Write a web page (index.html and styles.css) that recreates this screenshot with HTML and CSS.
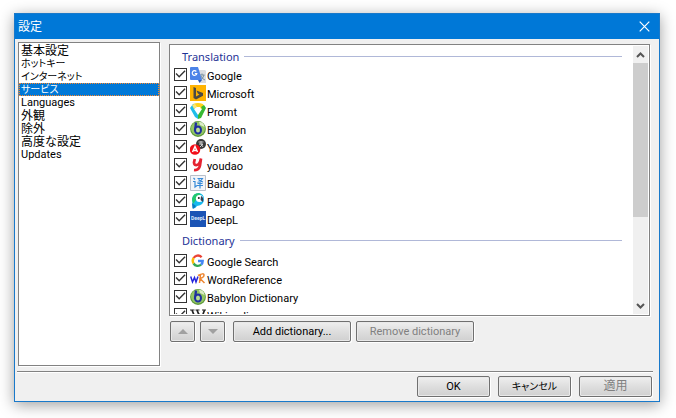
FILE: index.html
```
<!DOCTYPE html>
<html lang="ja">
<head>
    <meta charset="UTF-8">
    <title>設定</title>
    <link rel="stylesheet" href="styles.css">
</head>
<body>
    <div class="window">
        <header class="titlebar">
            <h1>設定</h1>
            <button type="button" class="close" aria-label="閉じる">
                <svg width="11" height="11" viewBox="0 0 11 11"><path d="M.7.7l9.6 9.6M10.3.7L.7 10.3" stroke="#fff" stroke-width="1.2"/></svg>
            </button>
        </header>

        <main class="content">
            <nav class="sections">
                <button type="button" class="kanji">基本設定</button>
                <button type="button" class="kana">ホットキー</button>
                <button type="button" class="kana">インターネット</button>
                <button type="button" class="kana selected" aria-current="page">サービス</button>
                <button type="button">Languages</button>
                <button type="button" class="kanji">外観</button>
                <button type="button" class="kanji">除外</button>
                <button type="button" class="kanji">高度な設定</button>
                <button type="button">Updates</button>
            </nav>

            <section class="services">
                <div class="list">
                    <div class="items">
                        <h2 class="first">Translation</h2>
                        <label><input type="checkbox" checked>
                            <svg class="icon" viewBox="0 0 16 16"><path d="M6 3h9l1 1v12h-6z" fill="#dadce0"/><path d="M9.500 8h5M12 6.500V8M14 8q-1 4-4 5M11 9q1 3 4 4" stroke="#78909c" fill="none"/><path d="M0 1q0-1 1-1h7l4 13H1q-1 0-1-1z" fill="#4c83e8"/><path d="M8 13h4l-2.500 3z" fill="#2857b5"/><path d="M6.300 4.500A2.300 2.300 0 1 0 6.800 6.500H4.800" stroke="#fff" stroke-width="1.200" fill="none"/></svg>
                            Google</label>
                        <label><input type="checkbox" checked>
                            <svg class="icon" viewBox="0 0 16 16"><path d="M0 0h16v16H0z" fill="#ffb300"/><path d="M3.500 2l2.500 1v8.500l3.500-2L7.800 8.600 6.500 5.500 13 8v2.700L6 14.500l-2.500-1.500z" fill="#4a4a45"/></svg>
                            Microsoft</label>
                        <label><input type="checkbox" checked>
                            <svg class="icon" viewBox="0 0 16 16"><path d="M3 1q5-2 10 0l2 4-4 1-1-2H6L4 6z" fill="#ffd21c"/><path d="M3 1L0 5l5 9 3 2V12L4 6l2-2z" fill="#20bdea"/><path d="M16 5l-5 10-3 1v-4l4-6-1-2 3-2z" fill="#37b934"/><path d="M2 2l3-1 2 3-3 2z" fill="#f9e57a"/></svg>
                            Promt</label>
                        <label><input type="checkbox" checked>
                            <svg class="icon" viewBox="0 0 16 16"><circle cx="8" cy="8" r="7.900" fill="#5f9a3c"/><circle cx="8" cy="7.500" r="7" fill="#93c665"/><path d="M9 1q5 0 5.500 5L10 4z" fill="#dcebc8"/><path d="M6 1.500L5 10" stroke="#1f2fa0" stroke-width="2.300" fill="none"/><ellipse cx="8" cy="9" rx="3" ry="3.500" stroke="#1f2fa0" stroke-width="2" fill="#b9dc96"/></svg>
                            Babylon</label>
                        <label><input type="checkbox" checked>
                            <svg class="icon" viewBox="0 0 16 16"><circle cx="11" cy="5" r="5" fill="#393939"/><path d="M8.500 3h5M9 5h4l-3 3M11 2v3l2 3" stroke="#ccc" fill="none"/><circle cx="5" cy="10.500" r="5.300" fill="#f20d18"/><path d="M2.500 13L5 7.500 7.500 13M3.500 11.500h3" stroke="#fff" stroke-width="1.400" fill="none"/></svg>
                            Yandex</label>
                        <label><input type="checkbox" checked>
                            <svg class="icon" viewBox="0 0 16 16"><path d="M4.800 2L4 5.500q0 3 3 2.500 2.500-.5 4-6.500L10 8.500q-1 5-6 4.500" stroke="#e52330" stroke-width="2.700" fill="none"/></svg>
                            youdao</label>
                        <label><input type="checkbox" checked>
                            <svg class="icon" viewBox="0 0 16 16"><path d="M.5.5h15v15H.5z" fill="#f3f5f9" stroke="#b9c0ca"/><path d="M3.500 3l1.500 1.500M3 6.500h2V12l2-1.500M7.500 3.500h5q-1.500 3-5 4M8.500 4.500q2 2 4.500 2.500M7.500 8.500h5M7 10.500h6M10 7v6.500" stroke="#388bd8" stroke-width="1.200" fill="none"/></svg>
                            Baidu</label>
                        <label><input type="checkbox" checked>
                            <svg class="icon" viewBox="0 0 16 16"><path d="M3 15.500L2 6q1-6 7-6 5 1 5 6 0 6-7 7-1 2-4 2.500z" fill="#17b9ef"/><path d="M2 6q1-6 7-6l2 1.500Q6 2 6 7l-3 4z" fill="#25c96b"/><circle cx="9.500" cy="5.500" r="3.600" fill="#fff"/><circle cx="8.800" cy="5" r="1" fill="#222"/><path d="M11 3q3 1 2 6l-2.500-2z" fill="#333e52"/><path d="M2 10l4 3-2 2.500H2.500z" fill="#087bc2"/></svg>
                            Papago</label>
                        <label><input type="checkbox" checked>
                            <svg class="icon" viewBox="0 0 16 16"><path d="M0 0h16v16H0z" fill="#1b54b5"/><text x="1" y="9" class="deepl">DeepL</text></svg>
                            DeepL</label>

                        <h2>Dictionary</h2>
                        <label><input type="checkbox" checked>
                            <svg class="icon" viewBox="0 0 16 16"><g fill="none" stroke-width="2.400"><path d="M3.600 5A5 5 0 0 1 11.600 4.200" stroke="#ea4335"/><path d="M3.600 5a5 5 0 0 0 0 5.500" stroke="#fbbc05"/><path d="M3.600 10.500a5 5 0 0 0 7.500 1.200" stroke="#34a853"/><path d="M11.100 11.700A5 5 0 0 0 12.700 8H8" stroke="#4285f4"/></g></svg>
                            Google Search</label>
                        <label><input type="checkbox" checked>
                            <svg class="icon" viewBox="0 0 16 16"><path d="M.7 5.500L2.500 11 4.500 6.500 6 11l2-5.500" stroke="#2424dc" stroke-width="1.500" fill="none"/><path d="M9.500 12l1-8.500M8 4.500q6-3 6-.5t-4 3.500l4.500 4.500" stroke="#ee8732" stroke-width="1.500" fill="none"/></svg>
                            WordReference</label>
                        <label><input type="checkbox" checked>
                            <svg class="icon" viewBox="0 0 16 16"><circle cx="8" cy="8" r="7.900" fill="#5f9a3c"/><circle cx="8" cy="7.500" r="7" fill="#93c665"/><path d="M9 1q5 0 5.500 5L10 4z" fill="#dcebc8"/><path d="M6 1.500L5 10" stroke="#1f2fa0" stroke-width="2.300" fill="none"/><ellipse cx="8" cy="9" rx="3" ry="3.500" stroke="#1f2fa0" stroke-width="2" fill="#b9dc96"/></svg>
                            Babylon Dictionary</label>
                        <label><input type="checkbox" checked>
                            <svg class="icon" viewBox="0 0 16 16"><path d="M2 3l4 10 3-7M7 3l4 10 3.500-10" stroke="#222" stroke-width="1.700" fill="none"/><path d="M0 3h4.500M5.500 3h4M12 3h4" stroke="#222"/></svg>
                            Wikipedia</label>
                    </div>
                    <div class="scrollbar">
                        <button type="button" aria-label="上へ"><svg width="9" height="6" viewBox="0 0 9 6"><path d="M1 5l3.500-3.500L8 5" fill="none" stroke="#555" stroke-width="2"/></svg></button>
                        <div class="track"><div class="thumb"></div></div>
                        <button type="button" aria-label="下へ"><svg width="9" height="6" viewBox="0 0 9 6"><path d="M1 1l3.500 3.500L8 1" fill="none" stroke="#555" stroke-width="2"/></svg></button>
                    </div>
                </div>
                <div class="tools">
                    <button type="button" class="btn arrow" aria-label="上に移動" disabled><svg width="10" height="5" viewBox="0 0 10 5"><path d="M0 5l5-5 5 5z" fill="#a0a0a0"/></svg></button>
                    <button type="button" class="btn arrow" aria-label="下に移動" disabled><svg width="10" height="5" viewBox="0 0 10 5"><path d="M0 0h10L5 5z" fill="#a0a0a0"/></svg></button>
                    <button type="button" class="btn wide add">Add dictionary...</button>
                    <button type="button" class="btn wide" disabled>Remove dictionary</button>
                </div>
            </section>
        </main>

        <footer class="actions">
            <button type="button" class="btn">OK</button>
            <button type="button" class="btn kana">キャンセル</button>
            <button type="button" class="btn kanji" disabled>適用</button>
        </footer>
    </div>
</body>
</html>
```
FILE: styles.css
```
* {
    box-sizing: border-box;
}
body {
    margin: 0;
    height: 100vh;
    padding: 13px 16px 16px 14px;
    background: #fff;
    font: 11px/13px Roboto, "Noto Sans CJK JP", sans-serif;
    color: #000;
}
button {
    margin: 0;
    padding: 0;
    border: none;
    font: inherit;
    color: inherit;
}
svg {
    display: block;
    flex: none;
}
.window {
    display: flex;
    flex-direction: column;
    height: 100%;
    border: 1px solid #1979ca;
    background: #f0f0f0;
    box-shadow: 0 3px 14px rgba(0,0,0,0.38);
}
.titlebar {
    display: flex;
    align-items: center;
    justify-content: space-between;
    height: 25px;
    padding: 0 9px 0 3px;
    background: #0078d7;
    color: #fff;
}
.titlebar h1 {
    margin: 0 0 2px;
    font: 12px/16px "Noto Sans CJK JP", sans-serif;
}
.close {
    background: none;
}
.content {
    display: flex;
    flex: 1;
    min-height: 0;
    gap: 9px;
    padding: 3px 9px 5px 3px;
}
.sections {
    width: 142px;
    padding: 1px 0;
    border: 1px solid #828282;
    background: #fff;
    box-shadow: 1px 1px 0 #fff;
}
.sections button {
    display: block;
    width: 100%;
    height: 13px;
    padding: 1px 0 0 2px;
    background: none;
    line-height: 12px;
    text-align: left;
    white-space: nowrap;
}
.sections .kanji, .btn.kanji {
    font-size: 12px;
}
.sections .kana, .btn.kana {
    font-size: 10px;
    font-feature-settings: "palt";
}
.sections .selected {
    background: #0078d7;
    color: #fff;
    outline: 1px dotted #ff8728;
    outline-offset: -1px;
}
.services {
    display: flex;
    flex: 1;
    flex-direction: column;
    min-width: 0;
    padding: 2px 0 24px;
}
.list {
    display: flex;
    flex: 1;
    min-height: 0;
    border: 1px solid #828282;
    background: #fff;
    box-shadow: 1px 1px 0 #fff;
    padding: 1px;
}
.items {
    flex: 1;
    overflow: hidden;
    padding-left: 3px;
}
.items h2 {
    display: flex;
    align-items: center;
    gap: 5px;
    height: 24px;
    margin: 0 11px 0 8px;
    font: 11px/13px "Noto Sans", sans-serif;
    color: #1e3296;
}
.items .first {
    height: 20px;
}
.items h2::after {
    content: "";
    flex: 1;
    height: 1px;
    background: #b0b8d8;
}
.items label {
    display: flex;
    align-items: center;
    gap: 1px;
    height: 18px;
    padding-top: 2px;
}
.items input {
    appearance: none;
    flex: none;
    width: 13px;
    height: 13px;
    margin: 0 2px 4px 0;
    border: 1px solid #333;
    background: #fff;
}
.items input:checked::before {
    content: "";
    display: block;
    width: 11px;
    height: 11px;
    background: #333;
    clip-path: polygon(5% 50%, 14% 42%, 38% 66%, 87% 16%, 96% 25%, 38% 84%);
}
.icon {
    width: 16px;
    height: 16px;
    margin-bottom: 2px;
}
.deepl {
    font: bold 5px Roboto, sans-serif;
    fill: #dce7fa;
}
.scrollbar {
    display: flex;
    flex-direction: column;
    width: 15px;
    background: #f0f0f0;
}
.scrollbar button {
    display: flex;
    align-items: center;
    justify-content: center;
    height: 17px;
    background: none;
}
.track {
    flex: 1;
}
.thumb {
    height: 66%;
    background: #cdcdcd;
}
.tools {
    display: flex;
    gap: 5px;
    padding: 5px 0 0 1px;
}
.btn {
    display: flex;
    align-items: center;
    justify-content: center;
    width: 73px;
    height: 21px;
    border: 1px solid #707070;
    border-radius: 2px;
    background: linear-gradient(#efefef, #dedede 50%, #d0d0d0);
    box-shadow: inset 0 0 0 1px #e9e9e9, 1px 1px 0 #fff;
    white-space: nowrap;
}
.btn:disabled {
    color: #808080;
}
.btn.arrow {
    width: 25px;
}
.btn.wide {
    width: 118px;
}
.btn.add {
    margin-left: 3px;
}
.actions {
    display: flex;
    justify-content: flex-end;
    gap: 8px;
    margin: 0 6px 0 2px;
    padding: 4px 1px;
    border-top: 1px solid #828282;
    box-shadow: inset 0 1px 0 #fff;
}
```
